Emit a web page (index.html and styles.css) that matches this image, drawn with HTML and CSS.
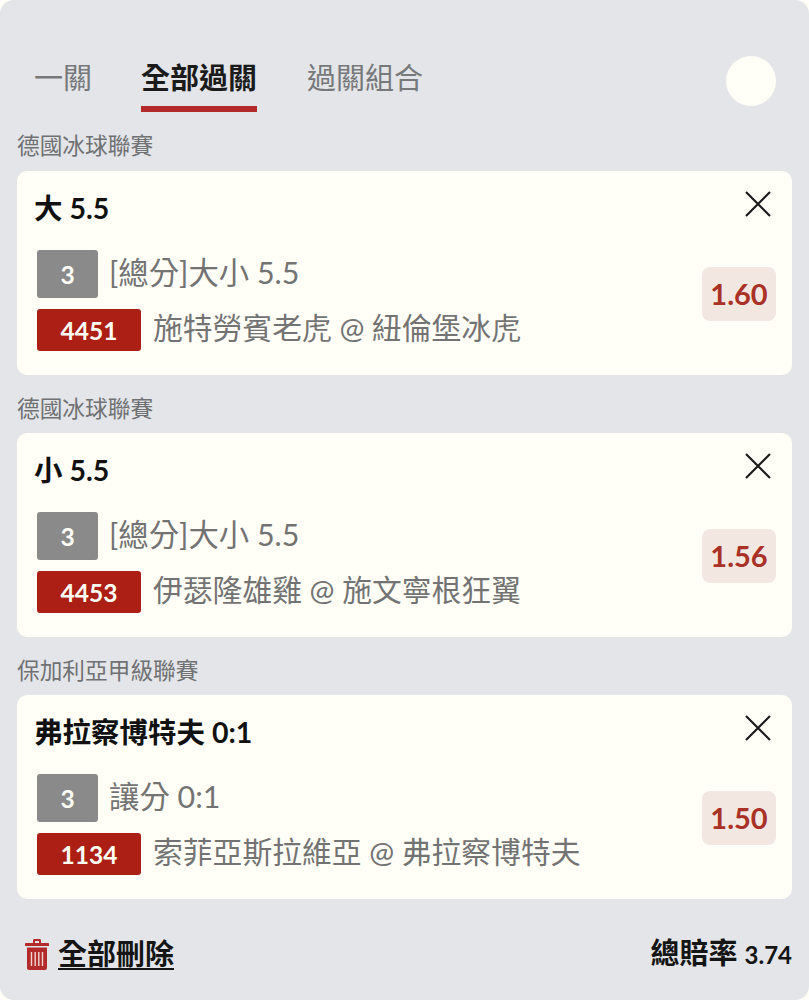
FILE: index.html
```html
<!DOCTYPE html>
<html lang="zh-Hant">
<head>
<meta charset="utf-8">
<title>全部過關</title>
<link rel="stylesheet" href="styles.css">
</head>
<body>
<main class="panel">
  <nav class="tabs">
    <span class="tab">一關</span>
    <span class="tab tab-active">全部過關</span>
    <span class="tab">過關組合</span>
    <span class="circle"></span>
  </nav>

  <section class="group">
    <h2 class="league">德國冰球聯賽</h2>
    <article class="card">
      <div class="card-head">
        <h3 class="pick">大 5.5</h3>
        <svg class="close" viewBox="0 0 26 26"><path d="M1 1L25 25M25 1L1 25"/></svg>
      </div>
      <div class="card-body">
        <div class="info">
          <div class="row row-market"><span class="badge badge-gray">3</span><span class="text">[總分]大小 5.5</span></div>
          <div class="row"><span class="badge badge-red">4451</span><span class="text">施特勞賓老虎 @ 紐倫堡冰虎</span></div>
        </div>
        <span class="odds">1.60</span>
      </div>
    </article>
  </section>

  <section class="group">
    <h2 class="league">德國冰球聯賽</h2>
    <article class="card">
      <div class="card-head">
        <h3 class="pick">小 5.5</h3>
        <svg class="close" viewBox="0 0 26 26"><path d="M1 1L25 25M25 1L1 25"/></svg>
      </div>
      <div class="card-body">
        <div class="info">
          <div class="row row-market"><span class="badge badge-gray">3</span><span class="text">[總分]大小 5.5</span></div>
          <div class="row"><span class="badge badge-red">4453</span><span class="text">伊瑟隆雄雞 @ 施文寧根狂翼</span></div>
        </div>
        <span class="odds">1.56</span>
      </div>
    </article>
  </section>

  <section class="group">
    <h2 class="league">保加利亞甲級聯賽</h2>
    <article class="card">
      <div class="card-head">
        <h3 class="pick">弗拉察博特夫 0:1</h3>
        <svg class="close" viewBox="0 0 26 26"><path d="M1 1L25 25M25 1L1 25"/></svg>
      </div>
      <div class="card-body">
        <div class="info">
          <div class="row row-market"><span class="badge badge-gray">3</span><span class="text">讓分 0:1</span></div>
          <div class="row"><span class="badge badge-red">1134</span><span class="text">索菲亞斯拉維亞 @ 弗拉察博特夫</span></div>
        </div>
        <span class="odds">1.50</span>
      </div>
    </article>
  </section>

  <footer class="foot">
    <a class="delete">
      <svg class="trash" viewBox="0 0 24 32">
        <path class="trash-fill" d="M8 5V2.500C8 1.500 8.700 1 9.500 1h5C15.300 1 16 1.500 16 2.500V5h7c.6 0 1 .4 1 1v2H0V6c0-.6.4-1 1-1zM10 3v2h4V3z"/>
        <path class="trash-fill" d="M2 9.500h20V30c0 1.100-.9 2-2 2H4c-1.100 0-2-.9-2-2z"/>
        <path class="trash-lines" d="M6.500 14v14M10.200 14v14M13.800 14v14M17.500 14v14"/>
      </svg>
      <span class="delete-text">全部刪除</span>
    </a>
    <div class="total">總賠率 <span class="total-num">3.74</span></div>
  </footer>
</main>
</body>
</html>
```

FILE: styles.css
```css
* { box-sizing: border-box; }

html, body {
  margin: 0;
  height: 1000px;
  overflow: hidden;
  background: #fffff7;
}

body {
  font-family: "Lato", "Noto Sans CJK TC", sans-serif;
}

.panel {
  height: 1000px;
  background: #e3e5e8;
  border-radius: 14px;
  padding: 56px 17px 0;
}

.tabs {
  display: flex;
  align-items: flex-start;
  gap: 50px;
  height: 56px;
  padding-left: 17px;
  padding-right: 16px;
}

.tab {
  font-size: 29px;
  line-height: 44px;
  color: #77787a;
  height: 56px;
}

.tab-active {
  color: #1b1b1b;
  font-weight: 700;
  border-bottom: 6px solid #b32a2a;
  margin-left: -1px;
}

.circle {
  width: 50px;
  height: 50px;
  border-radius: 50%;
  background: #fffff7;
  margin-left: auto;
}

.league {
  margin: 0;
  height: 58px;
  padding-top: 17px;
  font-size: 22.700px;
  line-height: 33px;
  font-weight: 400;
  color: #707173;
}

.group:first-of-type .league {
  height: 59px;
}

.card {
  height: 204px;
  background: #fffff7;
  border-radius: 10px;
  padding: 20px 21px 0 17px;
}

.card-head {
  display: flex;
  justify-content: space-between;
  align-items: flex-start;
  height: 59px;
}

.pick {
  margin: 0;
  font-size: 28.500px;
  line-height: 34px;
  font-weight: 700;
  color: #111;
}

.close {
  width: 26px;
  height: 26px;
  flex: none;
}

.close path {
  fill: none;
  stroke: #1b1b1b;
  stroke-width: 2.200;
}

.card-body {
  display: flex;
  justify-content: space-between;
  align-items: flex-start;
  padding-left: 3px;
  margin-right: -5px;
}

.info {
  display: flex;
  flex-direction: column;
  gap: 10px;
}

.row {
  display: flex;
  align-items: center;
  gap: 12px;
}

.row-market { gap: 11px; }

.badge {
  display: flex;
  align-items: center;
  justify-content: center;
  color: #fffff7;
  font-weight: 700;
  font-size: 24.500px;
  border-radius: 3px;
}

.badge-gray {
  width: 61px;
  height: 48px;
  background: #8a8a8a;
}

.badge-red {
  width: 104px;
  height: 42px;
  background: #ab1f14;
}

.text {
  font-size: 29.800px;
  line-height: 40px;
  padding-bottom: 4px;
  color: #737373;
  white-space: nowrap;
}

.row-market .text { font-size: 30.400px; }

.odds {
  width: 74px;
  height: 54px;
  margin-top: 17px;
  padding-bottom: 2px;
  display: flex;
  align-items: center;
  justify-content: center;
  background: #f3e7e2;
  border-radius: 8px;
  color: #a93226;
  font-size: 29px;
  font-weight: 700;
}

.foot {
  display: flex;
  justify-content: space-between;
  align-items: center;
  margin-top: 34px;
  padding-left: 8px;
}

.delete {
  display: flex;
  align-items: center;
  gap: 9px;
}

.trash {
  width: 24px;
  height: 32px;
  flex: none;
}

.trash-fill { fill: #b32a2a; fill-rule: evenodd; }

.trash-lines {
  fill: none;
  stroke: #f0d5d0;
  stroke-width: 1.400;
}

.delete-text {
  font-size: 29px;
  line-height: 40px;
  font-weight: 700;
  color: #151515;
  text-decoration: underline;
  text-underline-offset: 3px;
}

.total {
  font-size: 29px;
  line-height: 40px;
  font-weight: 700;
  color: #151515;
}

.total-num { font-size: 24px; }
```
